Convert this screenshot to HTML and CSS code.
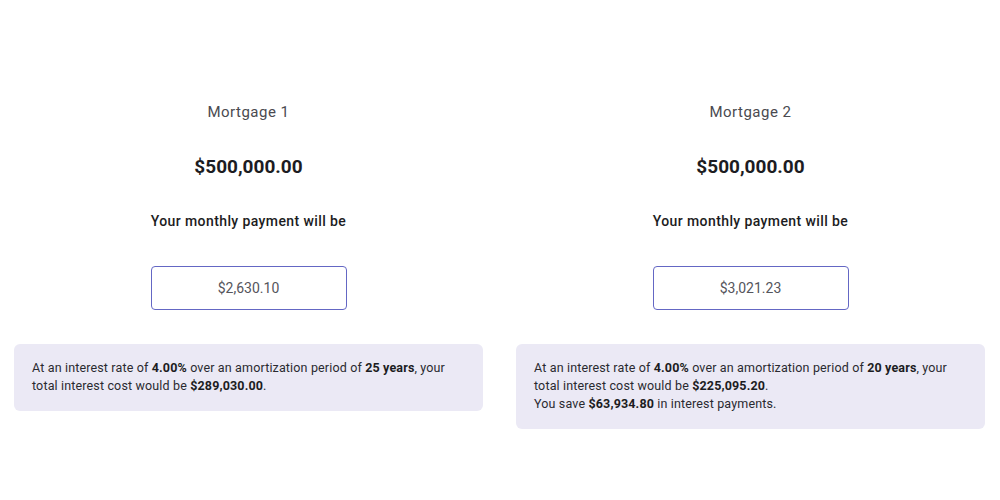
FILE: index.html
```html
<!DOCTYPE html>
<html>
<head>
<meta charset="utf-8">
<link rel="stylesheet" href="styles.css">
</head>
<body>
<div class="compare">
  <section class="mortgage">
    <h2 class="title">Mortgage 1</h2>
    <div class="amount">$500,000.00</div>
    <div class="label">Your monthly payment will be</div>
    <div class="payment">$2,630.10</div>
    <div class="info">
      At an interest rate of <b>4.00%</b> over an amortization period of <b>25 years</b>, your total interest cost would be <b>$289,030.00</b>.
    </div>
  </section>
  <section class="mortgage">
    <h2 class="title">Mortgage 2</h2>
    <div class="amount">$500,000.00</div>
    <div class="label">Your monthly payment will be</div>
    <div class="payment">$3,021.23</div>
    <div class="info">
      At an interest rate of <b>4.00%</b> over an amortization period of <b>20 years</b>, your total interest cost would be <b>$225,095.20</b>.<br>
      You save <b>$63,934.80</b> in interest payments.
    </div>
  </section>
</div>
</body>
</html>
```
FILE: styles.css
```css
html, body {
  margin: 0;
  padding: 0;
  background: #ffffff;
}
body {
  font-family: Roboto, "Liberation Sans", sans-serif;
  color: #1f1f24;
}
.compare {
  display: grid;
  grid-template-columns: 1fr 1fr;
  column-gap: 33px;
  padding: 101px 15px 0 14px;
  align-items: start;
}
.mortgage {
  display: flex;
  flex-direction: column;
  align-items: center;
}
.title {
  margin: 0;
  font-size: 15px;
  font-weight: 400;
  line-height: 22px;
  color: #4a4a50;
  letter-spacing: 0.5px;
}
.amount {
  margin-top: 31px;
  font-size: 19px;
  font-weight: 700;
  line-height: 26px;
  color: #1c1c22;
}
.label {
  margin-top: 32px;
  font-size: 14px;
  font-weight: 500;
  line-height: 18px;
  letter-spacing: 0.4px;
  color: #1c1c22;
}
.payment {
  margin-top: 36px;
  box-sizing: border-box;
  width: 196px;
  height: 44px;
  border: 1px solid #6467c4;
  border-radius: 4px;
  display: flex;
  align-items: center;
  justify-content: center;
  font-size: 14px;
  color: #55555c;
}
.info {
  align-self: stretch;
  margin-top: 34px;
  background: #ebe9f5;
  border-radius: 6px;
  padding: 15px 18px 16px;
  font-size: 12.5px;
  line-height: 18px;
  letter-spacing: 0.15px;
  color: #2a2a30;
}
.info b {
  font-weight: 700;
  color: #1c1c22;
}
```
